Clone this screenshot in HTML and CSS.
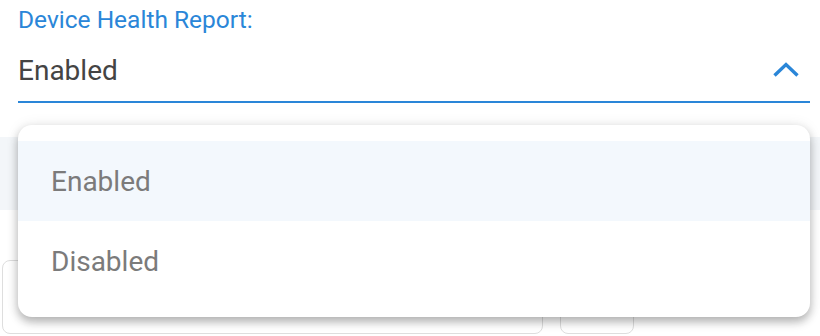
FILE: index.html
```html
<!DOCTYPE html>
<html>
<head>
<meta charset="utf-8">
<link rel="stylesheet" href="styles.css">
</head>
<body>
<div class="page">
  <div class="field">
    <div class="field-label">Device Health Report:</div>
    <div class="field-control">
      <span class="field-value">Enabled</span>
      <svg class="chevron" width="26" height="16" viewBox="0 0 26 16">
        <polyline points="1.5,13.5 13,2.5 24.5,13.5" fill="none" stroke="#2a86d8" stroke-width="3.4"/>
      </svg>
    </div>
  </div>
  <div class="band"></div>
  <div class="boxes">
    <div class="box box-wide"></div>
    <div class="box box-small"></div>
  </div>

  <div class="menu">
    <div class="option option-active">Enabled</div>
    <div class="option">Disabled</div>
  </div>
</div>
</body>
</html>
```

FILE: styles.css
```css
html, body {
  margin: 0;
  padding: 0;
  background: #ffffff;
}
body {
  font-family: Roboto, "Noto Sans", Arial, sans-serif;
  width: 820px;
  height: 336px;
  overflow: hidden;
}
.page {
  position: relative;
  width: 820px;
  height: 336px;
}
.field {
  margin: 0 10px 0 18px;
  padding-top: 6px;
}
.field-label {
  color: #2a86d8;
  font-size: 24.5px;
  line-height: 28px;
}
.field-control {
  display: flex;
  align-items: center;
  justify-content: space-between;
  margin-top: 21px;
  padding-bottom: 14px;
  border-bottom: 2px solid #2a86d8;
}
.field-value {
  color: #444444;
  font-size: 28px;
  line-height: 32px;
}
.chevron {
  margin-right: 11px;
  margin-top: -2px;
}
.band {
  margin-top: 34px;
  height: 73px;
  background: #f3f6f9;
}
.boxes {
  display: flex;
  gap: 17px;
  margin-top: 50px;
  padding-left: 2px;
}
.box {
  height: 72px;
  border: 1.5px solid #dedede;
  border-radius: 8px;
}
.box-wide {
  width: 539px;
}
.box-small {
  width: 72px;
}
.menu {
  position: absolute;
  left: 18px;
  top: 125px;
  width: 792px;
  padding: 16px 0;
  background: #ffffff;
  border-radius: 14px;
  box-shadow: 0 5px 10px rgba(0, 0, 0, 0.28), 0 0 14px rgba(0, 0, 0, 0.08);
}
.option {
  height: 80px;
  display: flex;
  align-items: center;
  padding-left: 33px;
  font-size: 28px;
  color: #7b7b7b;
}
.option-active {
  background: #f3f8fd;
}
```
